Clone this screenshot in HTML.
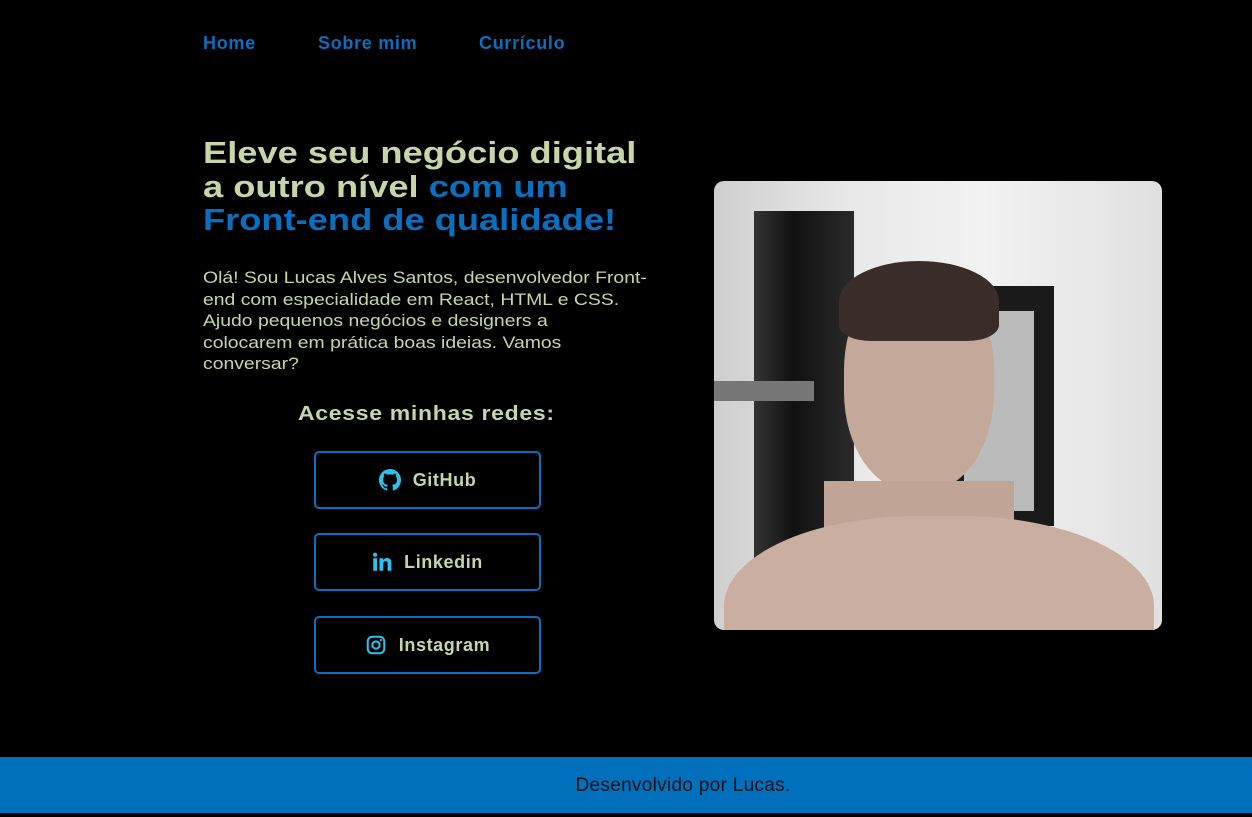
<!DOCTYPE html>
<html><head><meta charset="utf-8"><style>
*{margin:0;padding:0;box-sizing:border-box}
body{width:1252px;height:817px;background:#000;font-family:"Liberation Sans",sans-serif;position:relative;overflow:hidden}
nav a{position:absolute;top:33px;color:#0a6fbf;font-size:18px;font-weight:bold;text-decoration:none;letter-spacing:0.7px}
h1{position:absolute;left:203px;top:136px;font-size:31px;line-height:33.5px;color:#c6d6a9;font-weight:bold;transform:scaleX(1.17);transform-origin:left;white-space:nowrap}
h1 span{color:#0a6fbf}
p.i{position:absolute;left:203px;top:267px;font-size:17px;line-height:21.5px;color:#c6d6a9;transform:scaleX(1.14);transform-origin:left;white-space:nowrap}
h2{position:absolute;left:298px;top:403px;font-size:20px;color:#c6d6a9;font-weight:bold;letter-spacing:0.6px;transform:scaleX(1.15);transform-origin:left;white-space:nowrap}
.b{position:absolute;left:314px;width:227px;height:58px;border:2px solid #0a6fbf;border-radius:5px;display:flex;align-items:center;justify-content:center;color:#c6d6a9;font-size:18px;font-weight:bold;gap:12px;letter-spacing:0.6px}
.b svg{width:22px;height:22px}
.ph{position:absolute;left:714px;top:181px;width:448px;height:449px;border-radius:10px;overflow:hidden;background:linear-gradient(90deg,#cfcfcf,#e8e8e8 30%,#f2f2f2 60%,#e0e0e0)}
footer{position:absolute;left:0;top:757px;width:1252px;height:56px;background:#0070bd;color:#111;font-size:19px;letter-spacing:0.3px;text-align:center;line-height:58px;padding-left:114px}
</style></head><body>
<nav><a style="left:203px">Home</a><a style="left:318px">Sobre mim</a><a style="left:479px">Currículo</a></nav>
<h1>Eleve seu negócio digital<br>a outro nível <span>com um<br>Front-end de qualidade!</span></h1>
<p class="i">Olá! Sou Lucas Alves Santos, desenvolvedor Front-<br>end com especialidade em React, HTML e CSS.<br>Ajudo pequenos negócios e designers a<br>colocarem em prática boas ideias. Vamos<br>conversar?</p>
<h2>Acesse minhas redes:</h2>
<div class="b" style="top:451px"><svg viewBox="0 0 16 16"><path fill="#2ac3f0" d="M8 0C3.58 0 0 3.58 0 8c0 3.54 2.29 6.53 5.47 7.59.4.07.55-.17.55-.38v-1.33c-2.23.48-2.7-1.07-2.7-1.07-.36-.92-.89-1.170-.89-1.17-.73-.5.06-.49.06-.49.8.06 1.23.83 1.23.83.72 1.23 1.88.87 2.34.67.07-.52.28-.87.51-1.07-1.78-.2-3.65-.89-3.65-3.95 0-.87.31-1.59.82-2.15-.08-.2-.36-1.02.08-2.12 0 0 .67-.21 2.2.82a7.6 7.6 0 0 1 4 0c1.53-1.04 2.2-.82 2.2-.82.44 1.1.16 1.92.08 2.12.51.56.82 1.27.82 2.15 0 3.07-1.87 3.75-3.65 3.95.29.25.54.73.54 1.48v2.2c0 .21.15.46.55.38A8 8 0 0 0 16 8c0-4.42-3.58-8-8-8z"/></svg>GitHub</div>
<div class="b" style="top:533px"><svg viewBox="0 0 16 16" style="width:20px"><path fill="#2ac3f0" d="M1 5h3v10H1zM2.5 0.5a1.7 1.7 0 1 1 0 3.4 1.7 1.7 0 0 1 0-3.4zM6 5h2.9v1.4C9.4 5.5 10.5 4.8 12 4.8c3 0 3.5 2 3.5 4.5V15h-3V9.9c0-1.2 0-2.6-1.6-2.6S9 8.5 9 9.8V15H6z"/></svg>Linkedin</div>
<div class="b" style="top:616px"><svg viewBox="0 0 24 24"><rect x="3" y="3" width="18" height="18" rx="5" fill="none" stroke="#2ac3f0" stroke-width="2.2"/><circle cx="12" cy="12" r="4" fill="none" stroke="#2ac3f0" stroke-width="2.2"/><circle cx="17.3" cy="6.7" r="1.2" fill="#2ac3f0"/></svg>Instagram</div>
<div class="ph">
<div style="position:absolute;left:40px;top:30px;width:100px;height:419px;background:linear-gradient(90deg,#333,#111 40%,#2a2a2a)"></div>
<div style="position:absolute;left:230px;top:105px;width:110px;height:240px;background:#1a1a1a"></div>
<div style="position:absolute;left:250px;top:130px;width:70px;height:200px;background:#bbb"></div>
<div style="position:absolute;left:0;top:200px;width:100px;height:20px;background:#777"></div>
<div style="position:absolute;left:130px;top:90px;width:150px;height:220px;border-radius:45%;background:#c4a89a"></div>
<div style="position:absolute;left:125px;top:80px;width:160px;height:80px;border-radius:50% 50% 20% 20%;background:#3a2c28"></div>
<div style="position:absolute;left:110px;top:300px;width:190px;height:60px;background:#c0a596"></div>
<div style="position:absolute;left:10px;top:335px;width:430px;height:200px;border-radius:45% 45% 0 0;background:#c9aea1"></div>
</div>
<footer>Desenvolvido por Lucas.</footer>
</body></html>
